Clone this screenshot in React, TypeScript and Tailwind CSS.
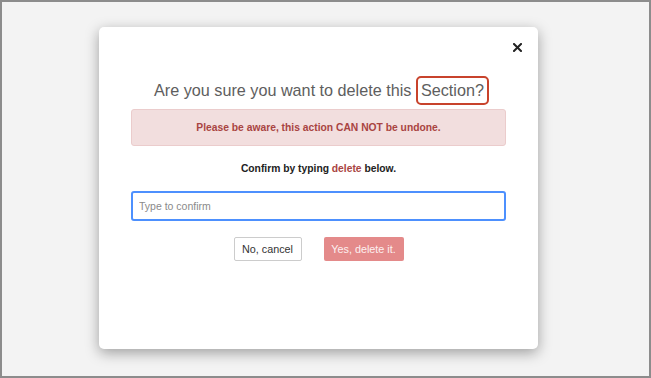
import React from "react";

export default function App() {
  return (
    <div className="w-[651px] h-[378px] border-2 border-[#8c8c8c] bg-[#f3f3f3] font-['Liberation_Sans',Arial,sans-serif] overflow-hidden">
      <div className="ml-[97px] mt-[25px] w-[439px] h-[322px] bg-white rounded-[5px] shadow-[0_4px_14px_rgba(0,0,0,0.35)] flex flex-col items-center pt-[13px] px-[32px]">
        <div className="w-full flex justify-end">
          <button className="w-[14px] h-[14px] -mr-[18px] flex items-center justify-center text-[#222]">
            <svg width="9" height="9" viewBox="0 0 9 9">
              <path d="M1 1 L8 8 M8 1 L1 8" stroke="#222" strokeWidth="2" strokeLinecap="square" />
            </svg>
          </button>
        </div>
        <h2 className="mt-[22px] h-[29px] flex items-center text-[16.2px] font-light text-[#5e5e5e] whitespace-nowrap pl-[6px]">
          <span>Are you sure you want to delete this&nbsp;</span>
          <span className="h-[29px] flex items-center px-[3px] border-2 border-[#c8432c] rounded-[5px]">Section?</span>
        </h2>
        <div className="mt-[4px] w-full h-[37px] bg-[#f2dede] border border-[#ebcccc] rounded-[3px] flex items-center justify-center text-[10.3px] font-bold text-[#a94442]">
          Please be aware, this action CAN NOT be undone.
        </div>
        <p className="mt-[17px] h-[12px] leading-[12px] text-[10.3px] font-bold text-[#222]">
          Confirm by typing <span className="text-[#a94442]">delete</span> below.
        </p>
        <input
          type="text"
          placeholder="Type to confirm"
          className="mt-[16px] w-full h-[30px] border-2 border-[#4d90fe] rounded-[3px] px-[6px] text-[10.5px] text-[#333] placeholder:text-[#8a8a8a] outline-none"
        />
        <div className="mt-[16px] flex gap-[22px]">
          <button className="w-[68px] h-[24px] border border-[#cccccc] bg-white text-[10.8px] text-[#333] rounded-[2px]">
            No, cancel
          </button>
          <button className="w-[80px] h-[24px] bg-[#e48a8a] text-[10.8px] text-[#fdf0f0] rounded-[2px]">
            Yes, delete it.
          </button>
        </div>
      </div>
    </div>
  );
}
